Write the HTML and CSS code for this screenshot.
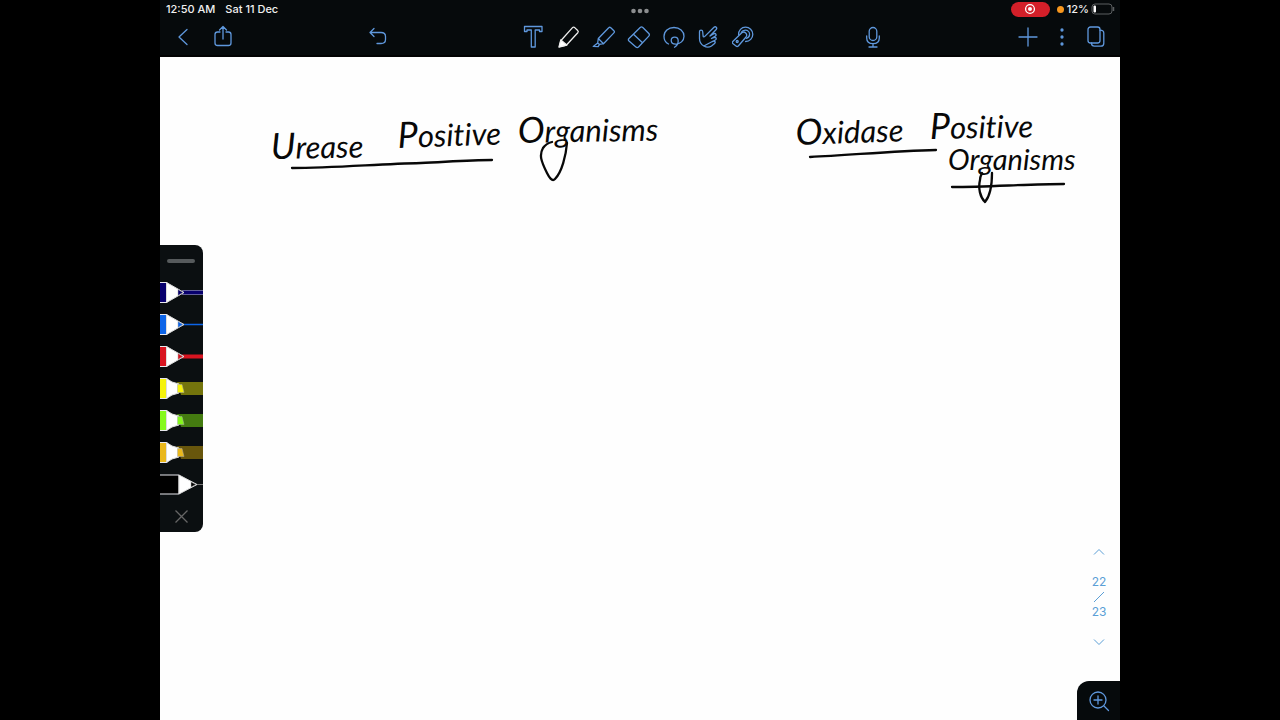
FILE: index.html
```html
<!DOCTYPE html>
<html lang="en">
<head>
<meta charset="utf-8">
<title>Notes</title>
<link rel="stylesheet" href="styles.css">
</head>
<body>
<div class="app">
  <header class="top">
    <div class="status">
      <div class="status-left"><span>12:50 AM</span><span>Sat 11 Dec</span></div>
      <svg class="dots" width="20" height="6" viewBox="0 0 20 6"><circle cx="2.500" cy="3" r="2.300"/><circle cx="9" cy="3" r="2.300"/><circle cx="15.500" cy="3" r="2.300"/></svg>
      <div class="status-right">
        <span class="record"><svg width="12" height="12" viewBox="0 0 12 12"><circle cx="6" cy="6" r="4.400" fill="none" stroke="#fff" stroke-width="1.300"/><circle cx="6" cy="6" r="2" fill="#fff"/></svg></span>
        <span class="mic-dot"></span>
        <span class="percent">12%</span>
        <svg width="24" height="12" viewBox="0 0 24 12"><rect x="1" y="1" width="20" height="10" rx="3" fill="none" stroke="#5b5e60"/><rect x="2.500" y="2.500" width="2.500" height="7" rx="1" fill="#fff"/><path d="M22.500 4v4" stroke="#5b5e60" stroke-width="1.500"/></svg>
      </div>
    </div>
    <nav class="toolbar">
      <div class="tools-left">
        <button class="tool" aria-label="Back"><svg class="icon" viewBox="0 0 24 24"><path d="M16 4.500 8 12l8 7.500"/></svg></button>
        <button class="tool share" aria-label="Share"><svg class="icon" viewBox="0 0 24 24"><path d="M9 7H6.500Q4 7 4 9.500v8.500q0 2.500 2.500 2.500h11q2.500 0 2.500-2.500V9.500Q20 7 17.500 7H15M12 14V1.500M8.500 5 12 1.500 15.500 5"/></svg></button>
        <button class="tool undo" aria-label="Undo"><svg class="icon" viewBox="0 0 24 24"><path d="M4.500 7.500h10.500q4.500 0 4.500 4v3q0 4-4.500 4H11M8 3.500l-4 4 4 4"/></svg></button>
      </div>
      <div class="tools-mid">
        <button class="tool" aria-label="Text"><svg class="icon" viewBox="0 0 24 24"><path d="M2.500 1.500h17.500v5h-2.500V5h-4.300v17H9.300V5H5v1.500H2.500z"/></svg></button>
        <button class="tool pen" aria-label="Pen"><svg class="icon" viewBox="0 0 24 24"><path d="M2.500 21.500 4 15.500 15.500 2.600q1-1.100 2.200 0l3 2.900q1.100 1 .1 2.200L9.500 20z"/><path class="solid" d="M2 22 3.800 15l6 5z"/></svg></button>
        <button class="tool" aria-label="Highlighter"><svg class="icon" viewBox="0 0 24 24"><path d="M6.300 13.500 16.700 2.800q1-1.100 2.100 0l3.100 3q1.100 1 0 2.100L11.500 18.700zM6.300 13.500l-.6 4.500 1.800 1.400 4-.7M5.700 18l-4.500 3.400 5 .2 1.300-2.200"/></svg></button>
        <button class="tool" aria-label="Eraser"><svg class="icon" viewBox="0 0 24 24"><path d="m2 13.500 11.200-11q1.300-1.200 2.600 0l6 6q1.200 1.300 0 2.600L11.500 22q-1.300 1.200-2.600 0L2 16q-1.300-1.200 0-2.500zM6.500 9.200l9 8.600"/></svg></button>
        <button class="tool" aria-label="Lasso"><svg class="icon" viewBox="0 0 24 24"><path d="M6.500 19C3.500 17.500 2 14.800 2 11.500 2 6.300 6.300 2.500 12 2.500s10 3.800 10 8.700c0 4.500-3.800 8-8.300 8-2.700 0-4.500-1.500-4.500-3.600 0-2 1.600-3.400 3.500-3.400s3.500 1.600 3.500 3.800c0 2.700-1.200 4.800-3.700 6.200"/></svg></button>
        <button class="tool" aria-label="Pointer"><svg class="icon" viewBox="0 0 24 24"><path d="M6.800 21C3.800 19.300 2.500 17 2.500 13.500V6.800c0-2.200 3-2.200 3.200-.1l.4 4.300c.2 1 1 1.100 1.700.4L17 2.300c1.600-1.400 3.600.6 2.200 2.200L13 11M13 11l4-2.300c1.800-.8 2.800 1.300 1.300 2.400L14.500 13.500M14.500 13.500l3-1c1.700-.4 2.400 1.700.8 2.500l-3 1.500M15.300 16.500l1.500-.3c1.500-.1 1.800 1.500.8 2.200L14.500 21c-2.300 1.500-5.200 1.400-7.700 0z"/></svg></button>
        <button class="tool" aria-label="Tape"><svg class="icon" viewBox="0 0 24 24"><path d="M6.600 9.800C6.300 5.500 9.500 2.200 13.500 2.200c4 0 7.300 3.100 7.300 7.100s-3.100 7.200-7.200 7.200"/><path d="M9.300 7.300c.8-1.400 2.300-2.200 4-2.200 2.500 0 4.300 1.900 4.300 4.200 0 2-1.300 3.500-3.100 4"/><path d="m.8 16.500 9-8.700c2.700-2.200 6.300 1.400 4.200 4.200L6.300 21q-1.200 1-2.300 0L.8 18.500q-.9-1 0-2z"/><circle cx="5.200" cy="16.500" r="1"/></svg></button>
      </div>
      <div class="tools-right">
        <button class="tool mic" aria-label="Record audio"><svg class="icon" viewBox="0 0 24 24"><rect x="8.200" y="2.500" width="7.600" height="13" rx="3.800"/><path d="M5.700 11v2c0 3.500 2.500 5.700 6.300 5.700s6.300-2.200 6.300-5.700v-2M12 18.700V22M8 22h8"/></svg></button>
        <button class="tool slim" aria-label="Add"><svg class="icon" viewBox="0 0 24 24"><path d="M12 3v18M3 12h18"/></svg></button>
        <button class="tool slim" aria-label="More"><svg class="icon" viewBox="0 0 24 24"><g class="solid"><circle cx="12" cy="5" r="1"/><circle cx="12" cy="12" r="1"/><circle cx="12" cy="19" r="1"/></g></svg></button>
        <button class="tool slim" aria-label="Pages"><svg class="icon" viewBox="0 0 24 24"><rect x="4" y="2" width="12" height="16" rx="2.500"/><path d="M16 5.200q3.800 0 3.800 3v10q0 3-3 3H10.500q-3 0-3-3.200"/></svg></button>
      </div>
    </nav>
  </header>
  <main class="page">
    <svg class="ink" viewBox="0 0 960 663" preserveAspectRatio="xMidYMin meet">
      <text x="111" y="102" transform="rotate(-1 111 102)"><tspan class="cap">U</tspan>rease</text>
      <text x="238" y="91" transform="rotate(-2 238 91)"><tspan class="cap">P</tspan>ositive</text>
      <text x="358" y="86" transform="rotate(-1 358 86)"><tspan class="cap">O</tspan>rganisms</text>
      <text x="636" y="88" transform="rotate(-2 636 88)"><tspan class="cap">O</tspan>xidase</text>
      <text x="770" y="82" transform="rotate(-1 770 82)"><tspan class="cap">P</tspan>ositive</text>
      <text class="small" x="788" y="113"><tspan class="cap">O</tspan>rganisms</text>
      <path d="M132 111c42 0 86-4 129-5 24-1 48-3 71-3M650 100c42-2 84-6 126-7M792 130c37 0 76-3 112-3"/>
      <path d="M407 86c-1 12-5 29-12 36-3 3-6-2-8-6-6-12-8-18-4-25 2-3 5-5 9-6M832 116c0 10-2 23-7 29-5-5-7-14-5-22 0-3 1-5 2-7"/>
    </svg>
    <aside class="palette" aria-label="Pens">
      <div class="handle"></div>
      <button class="swatch navy" aria-label="Navy pen"><svg viewBox="0 0 43 32"><path class="line" d="M22 16.500h21" stroke-width="5"/><path d="M22 14.500h21M22 18.500h21" stroke="#8d8bb0" stroke-width=".7"/><path class="body" d="M-1 6.500h8v20h-8z"/><path class="nib" d="M6.500 6.500 24 16.500l-17.500 10z"/><path class="tip" d="m18 13.500 5 3-5 3z"/></svg></button>
      <button class="swatch blue" aria-label="Blue pen"><svg viewBox="0 0 43 32"><path class="line" d="M22 16.500h21" stroke-width="1.500"/><path class="body" d="M-1 6.500h8v20h-8z"/><path class="nib" d="M6.500 6.500 24 16.500l-17.500 10z"/><path class="tip" d="m18 13.500 5 3-5 3z"/></svg></button>
      <button class="swatch red" aria-label="Red pen"><svg viewBox="0 0 43 32"><path class="line" d="M22 16.500h21" stroke-width="4"/><path class="body" d="M-1 6.500h8v20h-8z"/><path class="nib" d="M6.500 6.500 24 16.500l-17.500 10z"/><path class="tip" d="m18 13.500 5 3-5 3z"/></svg></button>
      <button class="swatch yellow" aria-label="Yellow highlighter"><svg viewBox="0 0 43 32"><path class="band" d="M17 10h26v13H21z"/><path class="body" d="M-1 6.500h8v20h-8z"/><path class="nib" d="M6.500 6.500 12 10l7 2v9l-7 2-5.500 3.500z"/><path class="tip" d="M17.500 12.500H22l2 8h-6.500z"/></svg></button>
      <button class="swatch green" aria-label="Green highlighter"><svg viewBox="0 0 43 32"><path class="band" d="M17 10h26v13H21z"/><path class="body" d="M-1 6.500h8v20h-8z"/><path class="nib" d="M6.500 6.500 12 10l7 2v9l-7 2-5.500 3.500z"/><path class="tip" d="M17.500 12.500H22l2 8h-6.500z"/></svg></button>
      <button class="swatch gold" aria-label="Gold highlighter"><svg viewBox="0 0 43 32"><path class="band" d="M17 10h26v13H21z"/><path class="body" d="M-1 6.500h8v20h-8z"/><path class="nib" d="M6.500 6.500 12 10l7 2v9l-7 2-5.500 3.500z"/><path class="tip" d="M17.500 12.500H22l2 8h-6.500z"/></svg></button>
      <button class="swatch black" aria-label="Black pen, selected"><svg viewBox="0 0 43 32"><path d="M34 16.500h9" stroke="#777"/><path class="body" d="M-2 7h21v19H-2z"/><path class="nib" d="M19 7l18 9.500L19 26z"/><path class="tip" d="m31 14 5 2.500-5 2.500z"/></svg></button>
      <button class="swatch" aria-label="Close"><svg viewBox="0 0 43 32"><path d="m15.500 10.500 12 12m0-12-12 12" stroke="#666" stroke-width="1.300"/></svg></button>
    </aside>
    <nav class="pager" aria-label="Pages">
      <button class="step" aria-label="Previous page"><svg viewBox="0 0 14 8"><path d="m2 6.500 5-5 5 5"/></svg></button>
      <span>22</span>
      <svg class="slash" viewBox="0 0 12 12"><path d="M1 11 11 1"/></svg>
      <span>23</span>
      <button class="step" aria-label="Next page"><svg viewBox="0 0 14 8"><path d="m2 1.500 5 5 5-5"/></svg></button>
    </nav>
    <button class="zoom" aria-label="Zoom in"><svg class="icon" viewBox="0 0 24 24"><circle cx="11" cy="11" r="8"/><path d="M11 7v8M7 11h8M17 17l4.500 4.500"/></svg></button>
  </main>
</div>
</body>
</html>
```
FILE: styles.css
```css
* { box-sizing: border-box; }
body {
  margin: 0;
  background: #000;
  font-family: Inter, "Liberation Sans", sans-serif;
}
button {
  padding: 0;
  border: 0;
  background: none;
  cursor: pointer;
}
svg { display: block; }
.app {
  width: 75%;
  min-height: 100vh;
  margin: 0 auto;
  display: flex;
  flex-direction: column;
}
.top {
  background: #060a0c;
  border-bottom: 2px solid #020203;
}
.status {
  height: 18px;
  padding: 0 5px 0 6px;
  display: grid;
  grid-template-columns: 1fr auto 1fr;
  align-items: center;
  color: #f0f0f0;
  font-size: 11px;
  font-weight: 500;
  line-height: 18px;
}
.status-left { display: flex; gap: 10px; }
.dots { fill: #8b8d8f; margin-top: 4px; }
.status-right {
  display: flex;
  justify-content: flex-end;
  align-items: center;
}
.record {
  width: 39px;
  height: 15px;
  margin-right: 7px;
  display: grid;
  place-items: center;
  border-radius: 8px;
  background: #d31f29;
}
.mic-dot {
  width: 7px;
  height: 7px;
  margin-right: 3px;
  border-radius: 50%;
  background: #f7971e;
}
.percent { margin-right: 2px; }
.toolbar {
  height: 37px;
  display: grid;
  grid-template-columns: 1fr auto 1fr;
}
.tools-left, .tools-mid, .tools-right { display: flex; }
.tools-left { padding-left: 5px; }
.tools-right { padding-right: 7px; }
.tool {
  width: 35px;
  height: 37px;
  display: grid;
  place-items: center;
}
.slim { width: 34px; }
.share { margin-left: 5px; }
.undo { margin: 0 122px 0 auto; }
.mic { margin: 0 auto 0 93px; }
.icon {
  width: 24px;
  height: 24px;
  fill: none;
  stroke: #5f98dd;
  stroke-width: 1.3;
  stroke-linecap: round;
  stroke-linejoin: round;
}
.tools-mid .icon { margin-right: 2px; }
.icon .solid { fill: #5f98dd; }
.pen .icon { stroke: #eee; }
.icon .solid { fill: #5f98dd; }
.pen .icon .solid { fill: #fff; }
.page {
  position: relative;
  flex: 1;
  background: #fefefe;
}
.ink {
  width: 100%;
  fill: none;
  stroke: #080808;
  stroke-width: 2.3;
  stroke-linecap: round;
  stroke-linejoin: round;
}
.ink text {
  fill: #080808;
  stroke: none;
  font-family: Lato, sans-serif;
  font-size: 31px;
  font-style: italic;
  font-variant-ligatures: none;
}
.ink .cap { font-size: 36px; }
.ink .small, .ink .small .cap { font-size: 29px; }
.palette {
  position: absolute;
  top: 188px;
  left: 0;
  width: 43px;
  border-radius: 0 8px 8px 0;
  background: #0b0f11;
  overflow: hidden;
}
.handle {
  width: 28px;
  height: 4px;
  margin: 14px 0 13px 7px;
  border-radius: 2px;
  background: #565a5c;
}
.swatch {
  display: block;
  width: 43px;
  height: 32px;
}
.swatch svg { width: 100%; }
.swatch .line { stroke: var(--c); }
.swatch .body { fill: var(--c); stroke: #e8e8ee; stroke-width: 1; }
.swatch .nib { fill: #fff; stroke: #ddd; stroke-width: 1; }
.swatch .tip { fill: var(--c); stroke: #aaa; stroke-width: 0.5; }
.swatch .band { fill: var(--band); }
.navy { --c: #08006e; }
.blue { --c: #0c64e8; }
.red { --c: #d81420; }
.yellow { --c: #f6f30c; --band: #74740c; }
.green { --c: #85f91c; --band: #447b10; }
.gold { --c: #eab81c; --band: #68560c; }
.black { --c: #000; }
.pager {
  position: absolute;
  right: 6px;
  bottom: 70px;
  width: 30px;
  display: flex;
  flex-direction: column;
  align-items: center;
  color: #5b9fd6;
  font-size: 12px;
  line-height: 16px;
  fill: none;
  stroke: #5b9fd6;
}
.step { width: 30px; height: 16px; display: grid; place-items: center; }
.step svg { width: 14px; height: 8px; }
.step:first-child { margin-bottom: 14px; }
.step:last-child { margin-top: 14px; }
.slash { width: 12px; height: 12px; margin: 1px 0; }
.zoom {
  position: absolute;
  right: 0;
  bottom: 0;
  width: 43px;
  height: 39px;
  display: grid;
  place-items: center;
  border-radius: 12px 0 0 0;
  background: #060a0c;
}
```
